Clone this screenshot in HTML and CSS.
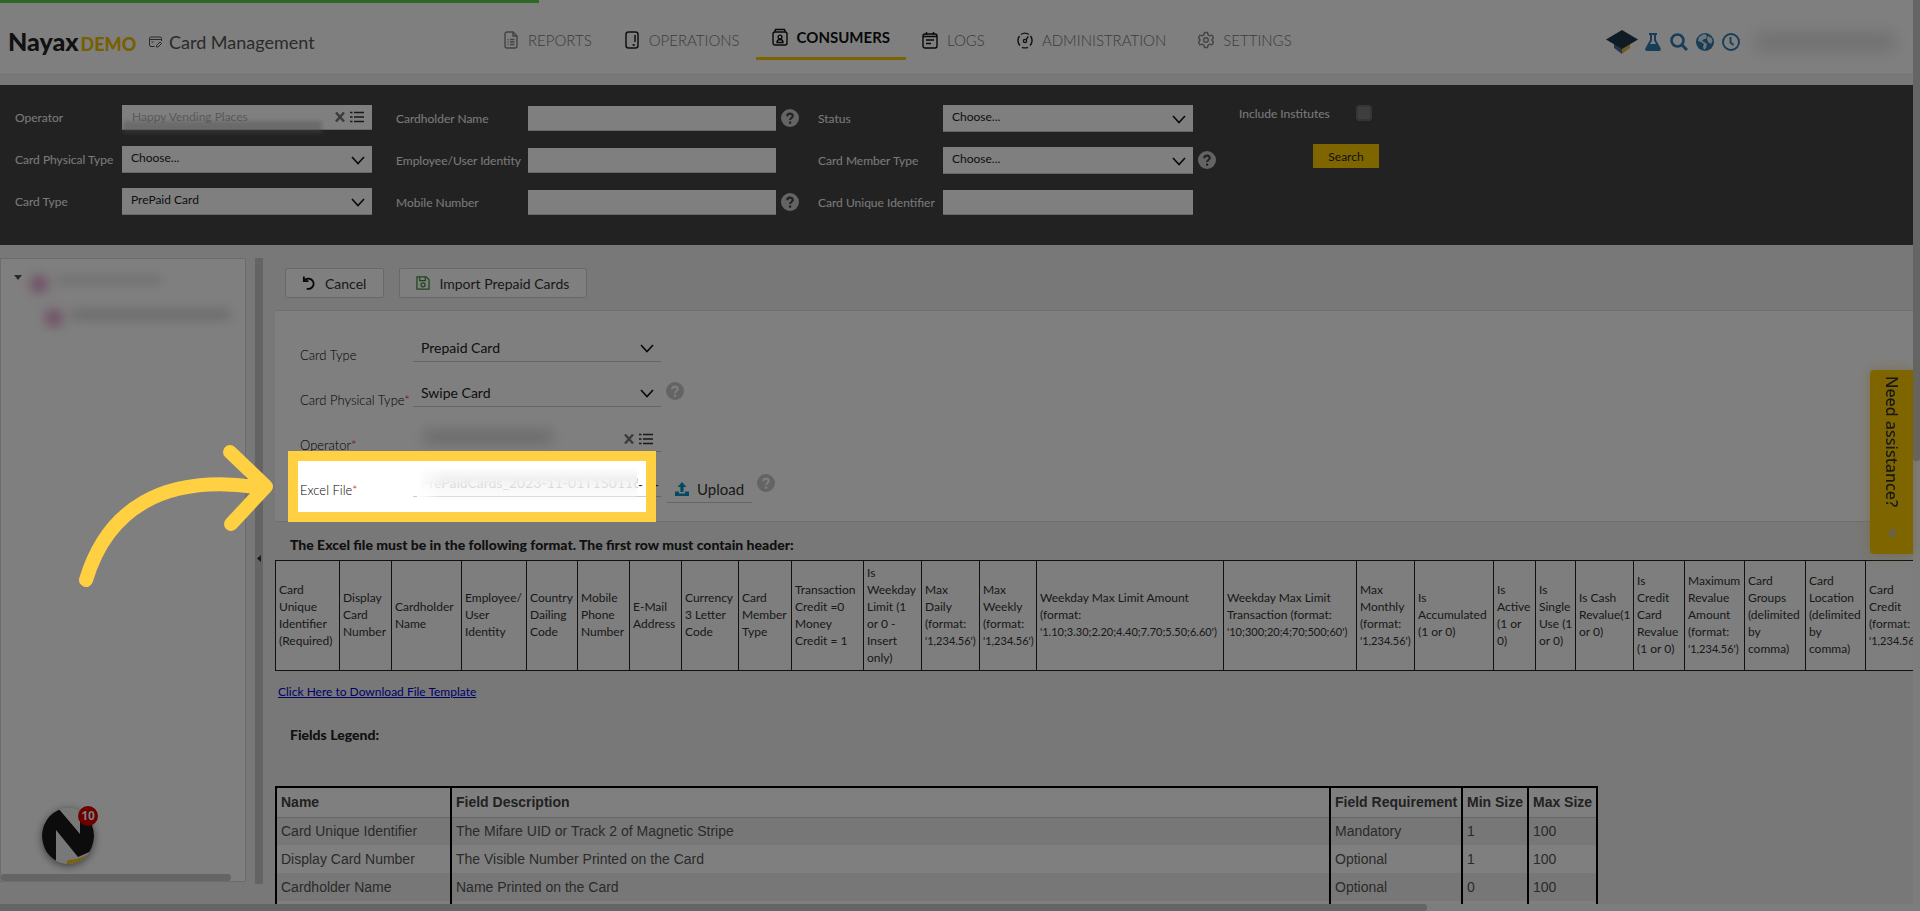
FILE: index.html
```html
<!DOCTYPE html>
<html lang="en">
<head>
<meta charset="utf-8">
<title>Card Management</title>
<link rel="stylesheet" href="styles.css">
</head>
<body>
<svg class="defs" aria-hidden="true">
  <symbol id="chev" viewBox="0 0 14 9"><path d="M1 1l6 6.500 6-6.500" fill="none" stroke="#111" stroke-width="1.600"/></symbol>
  <symbol id="x" viewBox="0 0 10 10"><path d="M1 .5l8 9M9 .5l-8 9" stroke="#777" stroke-width="2.400"/></symbol>
  <symbol id="list" viewBox="0 0 14 12"><path d="M4 1.500h10M4 6h10M4 10.500h10M0 1.500h2.500M0 6h2.500M0 10.500h2.500" stroke="#333" stroke-width="1.600"/></symbol>
  <symbol id="help" viewBox="0 0 18 18"><circle cx="9" cy="9" r="9" fill="currentColor"/><path d="M6.300 7.200C6.300 3.700 11.800 3.900 11.700 7c0 2-2.600 2-2.600 4M9.100 12.400v2.300" fill="none" stroke="var(--mark)" stroke-width="2.200"/></symbol>
</svg>
<div class="page">
  <div class="screen">
    <div class="progress"></div>
    <header class="header">
      <div class="brand">
        <span class="logo"><b>Nayax</b><i>DEMO</i></span>
        <svg class="cardicon" viewBox="0 0 13 12" fill="none" stroke="#555"><path d="M5.500 10.500H2A1.500 1.500 0 0 1 .5 9V2.500A1.500 1.500 0 0 1 2 1h9a1.500 1.500 0 0 1 1.500 1.500V5M.5 3.500h12M2.500 6h2M7.500 9.500L11 6l1.500 1.500L9 11H7.500z"/></svg>
        <h1>Card Management</h1>
      </div>
      <nav class="nav">
        <a href="#"><svg viewBox="0 0 16 18" fill="none" stroke="#888" stroke-width="1.400"><path d="M2 3a2 2 0 0 1 2-2h6l4 4v10a2 2 0 0 1-2 2H4a2 2 0 0 1-2-2zM10 1v4h4M7 8.500h4.500M7 11h4.500M7 13.500h4.500M4.500 8.500h1M4.500 11h1M4.500 13.500h1"/></svg>REPORTS</a>
        <a href="#"><svg viewBox="0 0 16 18" fill="none" stroke="#222" stroke-width="1.500"><rect x="2" y="1" width="12" height="16" rx="2.500"/><path d="M11 4v7M8.500 14H11"/></svg>OPERATIONS</a>
        <a href="#" class="active"><svg viewBox="0 0 16 18" fill="none" stroke="#111" stroke-width="1.400"><rect x="1" y="4" width="14" height="13" rx="2"/><path d="M2.500 4l1-2.500h9l1 2.500"/><circle cx="8" cy="9" r="1.900"/><path d="M5 14.500c0-4 6-4 6 0z"/></svg>CONSUMERS</a>
        <a href="#"><svg viewBox="0 0 16 18" fill="none" stroke="#111" stroke-width="1.400"><rect x="1" y="3" width="14" height="14" rx="2"/><path d="M4.500 1v3M11.500 1v3M1 5.500h14M4 9h8M4 12.500h5"/></svg>LOGS</a>
        <a href="#"><svg viewBox="0 0 16 18" fill="none" stroke="#222" stroke-width="1.400"><path d="M3 14.500A7.200 7.200 0 0 1 2.500 5M4 3.500a7 7 0 0 1 8 0M13.500 5a7.200 7.200 0 0 1-.5 9.500M5 16.300q3 1.200 6 0M9 8.800l2.200-3.300"/><circle cx="8" cy="10" r="1.600"/></svg>ADMINISTRATION</a>
        <a href="#"><svg viewBox="0 0 16 18" fill="none" stroke="#888" stroke-width="1.400"><path d="M6.500 1.500h3l.6 2.300 1.700 1 2.200-.7 1.500 2.600L13.900 9l1.600 2.300-1.500 2.600-2.200-.7-1.700 1-.6 2.300h-3l-.6-2.300-1.700-1-2.200.7-1.500-2.600L2.100 9 .5 6.700 2 4.100l2.200.7 1.700-1z" stroke-linejoin="round"/><circle cx="8" cy="9" r="2.300"/></svg>SETTINGS</a>
      </nav>
      <div class="tools">
        <svg class="cap" viewBox="0 0 32 24"><path d="M8 13v5l8 6v-9z" fill="#4b6d96"/><path d="M24 13v5l-8 6v-9z" fill="#e8b93a"/><path d="M16 0l16 9.500L16 19 0 9.500z" fill="#20394a"/></svg>
        <svg viewBox="0 0 18 18"><path d="M5 0h8v2h-1v5l4.500 8c.8 1.600.2 3-1.500 3H3c-1.700 0-2.300-1.400-1.500-3L6 7V2H5zM8 2v5.500L6 11h6l-2-3.500V2z" fill="#2f7bb0" fill-rule="evenodd"/></svg>
        <svg viewBox="0 0 18 18" fill="none" stroke="#2f7bb0"><circle cx="7.500" cy="7.500" r="6" stroke-width="2.600"/><path d="M12 12l5 5" stroke-width="3"/></svg>
        <svg viewBox="0 0 18 18"><circle cx="9" cy="9" r="9" fill="#2f7bb0"/><path d="M7 1.500L3 4 2 8l3 1 3 2-1 3 1 3 2-2 1-4-3-2-2-1 2-2 2 0 1-3-2-2zM12 3l-1 3 1 3 3 2 1.500-3-1-3z" fill="#fff" opacity=".85"/></svg>
        <svg viewBox="0 0 18 18" fill="none" stroke="#2f7bb0"><circle cx="9" cy="9" r="8" stroke-width="1.900"/><path d="M8.500 4v5.500l3 2.500" stroke-width="1.900"/></svg>
        <span class="user"></span>
      </div>
    </header>

    <form class="filters">
      <div class="group g1">
        <label for="op">Operator</label>
        <span class="lookup"><input id="op" value="Happy Vending Places"><i class="smudge"></i><svg class="ix"><use href="#x"/></svg><svg class="il"><use href="#list"/></svg></span>
        <label for="cpt">Card Physical Type</label>
        <span class="sel"><select id="cpt"><option>Choose...</option></select><svg><use href="#chev"/></svg></span>
        <label for="ct">Card Type</label>
        <span class="sel"><select id="ct"><option>PrePaid Card</option></select><svg><use href="#chev"/></svg></span>
      </div>
      <div class="group g2">
        <label for="chn">Cardholder Name</label><input id="chn"><svg class="help"><use href="#help"/></svg>
        <label for="eui">Employee/User Identity</label><input id="eui"><span></span>
        <label for="mob">Mobile Number</label><input id="mob"><svg class="help"><use href="#help"/></svg>
      </div>
      <div class="group g3">
        <label for="st">Status</label><span class="sel"><select id="st"><option>Choose...</option></select><svg><use href="#chev"/></svg></span><span></span>
        <label for="cmt">Card Member Type</label><span class="sel"><select id="cmt"><option>Choose...</option></select><svg><use href="#chev"/></svg></span><svg class="help"><use href="#help"/></svg>
        <label for="cui">Card Unique Identifier</label><input id="cui"><span></span>
      </div>
      <div class="g4">
        <div class="check"><label for="inc">Include Institutes</label><input type="checkbox" id="inc"></div>
        <button type="button" class="search">Search</button>
      </div>
    </form>

    <div class="work">
      <aside class="side">
        <svg class="twist" viewBox="0 0 8 5"><path d="M0 0h8L4 5z" fill="#555"/></svg>
        <div class="tree">
          <div class="node"><i></i><b></b></div>
          <div class="node sub"><i></i><b></b></div>
        </div>
        <div class="sidebar-thumb"></div>
      </aside>
      <div class="splitter"><svg viewBox="0 0 4 7"><path d="M4 0v7L0 3.500z" fill="#333"/></svg></div>
      <main class="main">
        <div class="actions">
          <button type="button"><svg viewBox="0 0 15 15" fill="none" stroke="#111" stroke-width="2"><path d="M2.500 5A5.500 5.500 0 1 1 5 13.500M2 .5V5.500h5"/></svg>Cancel</button>
          <button type="button"><svg viewBox="0 0 15 15" fill="none" stroke="#3b8a3b" stroke-width="1.300"><path d="M1 1h10l3 3v10H1zM4 1v4h6V1"/><circle cx="7.500" cy="9.500" r="2.200"/></svg>Import Prepaid Cards</button>
        </div>
        <form class="panel">
          <div class="row"><label for="f1">Card Type</label><span class="field sel"><select id="f1"><option>Prepaid Card</option></select><svg><use href="#chev"/></svg></span></div>
          <div class="row"><label for="f2">Card Physical Type<em>*</em></label><span class="field sel"><select id="f2"><option>Swipe Card</option></select><svg><use href="#chev"/></svg></span><svg class="help"><use href="#help"/></svg></div>
          <div class="row"><label for="f3">Operator<em>*</em></label><span class="field lookup"><input id="f3"><i class="smudge"></i><svg class="ix"><use href="#x"/></svg><svg class="il"><use href="#list"/></svg></span></div>
          <div class="row"><label for="f4">Excel File<em>*</em></label><span class="field file"><input id="f4" value="PrePaidCards_2023-11-01T150116110111"><i class="veil"></i><i class="dots">- - -</i></span><button type="button" class="upload"><svg viewBox="0 0 14 14" fill="#0b95c9"><path d="M7 0l4.500 5H8.600v5H5.400V5H2.500zM0 9.500h4v2h6v-2h4V14H0z"/></svg>Upload</button><svg class="help low"><use href="#help"/></svg></div>
        </form>
        <h2>The Excel file must be in the following format. The first row must contain header:</h2>
        <table class="format">
          <colgroup><col style="width:64px"><col style="width:52px"><col style="width:70px"><col style="width:65px"><col style="width:51px"><col style="width:52px"><col style="width:52px"><col style="width:57px"><col style="width:53px"><col style="width:72px"><col style="width:58px"><col style="width:58px"><col style="width:57px"><col style="width:187px"><col style="width:133px"><col style="width:58px"><col style="width:79px"><col style="width:42px"><col style="width:40px"><col style="width:58px"><col style="width:51px"><col style="width:60px"><col style="width:61px"><col style="width:60px"><col style="width:60px"></colgroup>
          <tr>
            <td>Card<br>Unique<br>Identifier<br>(Required)</td><td>Display<br>Card<br>Number</td><td>Cardholder<br>Name</td><td>Employee/<br>User<br>Identity</td><td>Country<br>Dailing<br>Code</td><td>Mobile<br>Phone<br>Number</td><td>E-Mail<br>Address</td><td>Currency<br>3 Letter<br>Code</td><td>Card<br>Member<br>Type</td><td>Transaction<br>Credit =0<br>Money<br>Credit = 1</td><td>Is<br>Weekday<br>Limit (1<br>or 0 -<br>Insert<br>only)</td><td>Max<br>Daily<br>(format:<br><span class="num">'1,234.56')</span></td><td>Max<br>Weekly<br>(format:<br><span class="num">'1,234.56')</span></td><td>Weekday Max Limit Amount<br>(format:<br><span class="num">'1.10;3.30;2.20;4.40;7.70;5.50;6.60')</span></td><td>Weekday Max Limit<br>Transaction (format:<br><span class="num">'10;300;20;4;70;500;60')</span></td><td>Max<br>Monthly<br>(format:<br><span class="num">'1,234.56')</span></td><td>Is<br>Accumulated<br>(1 or 0)</td><td>Is<br>Active<br>(1 or<br>0)</td><td>Is<br>Single<br>Use (1<br>or 0)</td><td>Is Cash<br>Revalue(1<br>or 0)</td><td>Is<br>Credit<br>Card<br>Revalue<br>(1 or 0)</td><td>Maximum<br>Revalue<br>Amount<br>(format:<br><span class="num">'1,234.56')</span></td><td>Card<br>Groups<br>(delimited<br>by<br>comma)</td><td>Card<br>Location<br>(delimited<br>by<br>comma)</td><td>Card<br>Credit<br>(format:<br><span class="num">'1,234.56')</span></td>
          </tr>
        </table>
        <a class="download" href="#">Click Here to Download File Template</a>
        <h2 class="legend-title">Fields Legend:</h2>
        <table class="legend">
          <thead><tr><th class="c1">Name</th><th>Field Description</th><th class="c3">Field Requirement</th><th class="c4">Min Size</th><th class="c5">Max Size</th></tr></thead>
          <tbody>
            <tr><td>Card Unique Identifier</td><td>The Mifare UID or Track 2 of Magnetic Stripe</td><td>Mandatory</td><td>1</td><td>100</td></tr>
            <tr><td>Display Card Number</td><td>The Visible Number Printed on the Card</td><td>Optional</td><td>1</td><td>100</td></tr>
            <tr><td>Cardholder Name</td><td>Name Printed on the Card</td><td>Optional</td><td>0</td><td>100</td></tr>
            <tr><td></td><td></td><td></td><td></td><td></td></tr>
          </tbody>
        </table>
      </main>
    </div>
  </div>
  <div class="vbar"><div></div></div>
  <div class="hbar"><div></div></div>
</div>

<button type="button" class="assist"><span>Need assistance?</span><svg viewBox="0 0 8 10"><path d="M7 1L2 5l5 4" fill="none" stroke="#c0c0c8" stroke-width="2.600"/></svg></button>
<div class="chat">
  <svg viewBox="0 0 52 56"><defs><clipPath id="cc"><ellipse cx="26" cy="28" rx="26" ry="28"/></clipPath></defs><g clip-path="url(#cc)"><rect width="52" height="56" fill="#f0f0f0"/><path d="M0 0h16l22 26V0h14v42L36 49 14 22v34H0z" fill="#181818"/><path d="M24 56l2-4c8 0 16-3 26-9v13z" fill="#f2c21a"/></g></svg>
  <span>10</span>
</div>
<div class="spotlight"></div>
<svg class="arrow" viewBox="0 0 196 144" fill="none" stroke="#ffd042" stroke-width="14" stroke-linecap="round" stroke-linejoin="round"><path d="M8 136C29 66 84 30 178 43M152 8l36 34.500L153 80"/></svg>
</body>
</html>
```
FILE: styles.css
```css
* { box-sizing: border-box; }
body { margin: 0; font-family: Lato, "Open Sans", sans-serif; font-size: 13px; color: #333; overflow: hidden; }
input, select, button { font-family: inherit; font-size: 13px; color: #222; margin: 0; border-radius: 0; }
.defs { display: none; }
.page { display: grid; grid-template-columns: minmax(0, 1fr) 7px; grid-template-rows: minmax(0, 1fr) 7px; height: 100vh; background: #f0f0f0; }
.screen { position: relative; overflow: hidden; }
.vbar { background: #fbfbfb; }
.vbar div { height: 51%; background: #cacaca; border-radius: 0 0 3px 3px; }
.hbar { background: #fbfbfb; grid-column: 1 / 3; }
.hbar div { width: 74.3%; height: 7px; background: #cacaca; border-radius: 0 3px 3px 0; }
.progress { position: absolute; left: 0; top: 0; width: 539px; height: 3px; background: #57d046; }

.header { height: 75px; background: #fff; display: flex; align-items: flex-start; border-bottom: 1px solid #e6e6e6; }
.brand { width: 487px; padding: 28px 0 0 8px; display: flex; align-items: center; height: 56px; }
.logo { display: flex; align-items: baseline; width: 141px; font-size: 25px; line-height: 28px; }
.logo b { font-weight: 900; color: #222; }
.logo i { font-style: normal; font-weight: 900; font-size: 18px; color: #f0be00; margin-left: 2px; }
.cardicon { width: 13px; height: 12px; margin-right: 7px; }
h1 { margin: 0; font-size: 18px; line-height: 24px; font-weight: 400; color: #555; }
.nav { display: flex; }
.nav a { display: flex; align-items: center; gap: 9px; height: 60px; padding: 24px 16px 5px; text-decoration: none; color: #777; font-size: 15px; font-weight: 300; white-space: nowrap; }
.nav a.active { color: #111; font-weight: 700; padding-top: 20px; padding-bottom: 3px; border-bottom: 3px solid #f8c800; }
.nav svg { width: 16px; height: 18px; }
.tools { margin-left: auto; padding: 30px 18px 0 0; display: flex; align-items: center; gap: 8px; }
.tools svg { width: 18px; height: 18px; }
.tools .cap { width: 32px; height: 24px; margin-right: -2px; }
.user { width: 140px; height: 20px; margin-left: 7px; background: #e2e2e2; filter: blur(8px); }

.filters { margin-top: 10px; height: 160px; background: #444; display: flex; align-items: flex-start; padding: 18px 0 0 15px; }
.filters label { color: #f4f4f4; white-space: nowrap; font-size: 12px; }
.group { display: grid; align-items: center; grid-auto-rows: 42px; margin-top: -6px; }
.group input { height: 25px; width: 100%; border: 0; border-bottom: 1px solid #ccc; background: #fff; padding: 0 10px; }
.g1 { grid-template-columns: 107px 250px; width: 381px; margin-top: -7px; }
.g2 { grid-template-columns: 132px 248px 23px; width: 422px; }
.g3 { grid-template-columns: 125px 250px 22px; width: 421px; }
.g4 { width: 140px; display: flex; flex-direction: column; align-items: flex-end; gap: 21px; }
.check { display: flex; justify-content: space-between; align-items: center; width: 133px; height: 20px; margin-right: 7px; }
.check input { appearance: none; width: 16px; height: 16px; background: #7c7c7c; border: 2px solid #6a6a6a; border-radius: 3px; }
.search { width: 66px; height: 24px; border: 0; background: #ffcb00; color: #222; font-size: 12px; }
.sel { position: relative; display: block; }
.sel select { appearance: none; width: 100%; height: 27px; border: 0; border-bottom: 1px solid #ccc; background: #fff; padding: 0 9px 3px; display: block; }
.group select { font-size: 12px; }
.sel svg { position: absolute; right: 7px; top: 10px; width: 14px; height: 9px; pointer-events: none; }
.lookup { position: relative; display: block; }
.lookup svg { position: absolute; pointer-events: none; }
.ix { right: 27px; top: 7px; width: 10px; height: 10px; }
.il { right: 8px; top: 6px; width: 14px; height: 12px; }
.g1 .lookup input { color: #b4b4b4; font-size: 12px; }
.smudge { position: absolute; left: 10px; top: 5px; width: 130px; height: 14px; background: #999; opacity: .4; filter: blur(7px); }
.g1 .smudge { left: 1px; top: 16px; width: 199px; height: 12px; filter: blur(2px); }
.help { width: 18px; height: 18px; color: #c8c8c8; --mark: #444; margin-left: 5px; }
.panel .help { color: #c8c8c8; --mark: #fff; }

.work { display: flex; padding-top: 13px; height: calc(100% - 245px); align-items: flex-start; }
.side { position: relative; width: 246px; flex: none; height: calc(100% - 22px); background: #fff; border: 1px solid #d8d8d8; padding: 16px 0 0 13px; overflow: hidden; display: flex; align-items: flex-start; }
.twist { flex: none; width: 8px; height: 5px; }
.node { display: flex; align-items: center; margin-left: 8px; height: 34px; filter: blur(6px); }
.tree { margin-top: -8px; }
.node i { width: 18px; height: 18px; background: #e09ac8; border-radius: 9px; }
.node b { width: 106px; height: 8px; margin: 0 0 8px 8px; background: #ddd; }
.node.sub { margin-left: 23px; }
.node.sub b { width: 160px; height: 9px; background: #d0d0d0; }
.sidebar-thumb { position: absolute; left: 0; bottom: 0; width: 230px; height: 7px; border-radius: 3px; background: #cacaca; }
.splitter { width: 8px; flex: none; height: calc(100% - 20px); margin: 0 12px 0 9px; background: #c8c8c8; display: flex; align-items: center; justify-content: center; padding-bottom: 26px; }
.splitter svg { width: 4px; height: 7px; }
.main { flex: 1; min-width: 0; padding-top: 10px; }
.actions { display: flex; gap: 15px; padding-left: 10px; }
.actions button { display: flex; align-items: center; gap: 9px; height: 30px; padding: 0 17px 0 16px; border: 1px solid #d0d0d0; border-radius: 2px; background: #fff; font-size: 14px; white-space: nowrap; color: #333; }
.actions svg { width: 14px; height: 14px; }
.panel { margin-top: 12px; height: 212px; background: #fff; border-top: 1px solid #dcdcdc; border-bottom: 1px solid #dcdcdc; padding: 22px 0 0 25px; }
.row { display: flex; align-items: flex-start; height: 45px; }
.row label { width: 113px; padding-top: 13px; font-weight: 300; color: #000; line-height: 18px; white-space: nowrap; }
.row em { color: #e02020; font-style: normal; }
.field { width: 248px; }
.field select, .field input { width: 100%; height: 29px; border: 0; border-bottom: 1px solid #ccc; background: transparent; padding: 0 8px; font-size: 14px; display: block; }
.field.sel svg { top: 11px; }
.row .help { margin: 4px 0 0 5px; }
.row .low { margin: 6px 0 0 5px; }
.field.lookup .ix { top: 11px; }
.field.lookup .il { top: 10px; }
.field.lookup .smudge { top: 7px; }
.file { position: relative; }
.file input { color: #c4c4c4; }
.veil { position: absolute; left: 4px; top: -1px; width: 220px; height: 33px; background: linear-gradient(90deg, #fff, rgba(255,255,255,0) 12%), linear-gradient(#fff 0, #f1f1f1 35%, rgba(240,240,240,.5) 60%, rgba(250,250,250,.3)); }
.dots { position: absolute; left: 225px; top: 10px; font-style: normal; white-space: nowrap; line-height: 14px; background: #fff; }
.upload { margin: 6px 0 0 6px; width: 85px; height: 29px; border: 0; border-bottom: 1px solid #ccc; background: transparent; display: flex; align-items: center; justify-content: center; gap: 8px; padding: 2px 0 0; font-size: 15px; color: #333; }
.upload svg { width: 14px; height: 14px; }

h2 { margin: 0; padding: 14px 0 0 15px; font-size: 14px; line-height: 18px; font-weight: 900; color: #222; white-space: nowrap; }
.format { margin-top: 6px; border-collapse: collapse; table-layout: fixed; width: 1644px; }
.format td { height: 110px; border: 1px solid #222; background: #fcfcfc; padding: 0 3px 2px; font-size: 12px; line-height: 17px; white-space: nowrap; color: #333; }
.num { font-size: 11px; }
.download { display: block; margin: 12px 0 0 3px; font-size: 12px; line-height: 18px; color: #0000d0; width: max-content; }
.legend-title { padding-top: 25px; }
.legend { margin-top: 42px; width: 1323px; border-collapse: collapse; table-layout: fixed; font-family: "Liberation Sans", sans-serif; font-size: 14px; color: #555; border: 2px solid #000; background: #fff; }
.legend th, .legend td { border-left: 2px solid #000; border-right: 2px solid #000; text-align: left; height: 28px; padding: 0 4px; line-height: 16px; white-space: nowrap; }
.legend th { height: 30px; border-bottom: 1px solid #ccc; color: #444; }
.legend tbody tr:nth-child(odd) { background: #efefef; }
.c1 { width: 175px; }
.c3 { width: 132px; }
.c4 { width: 66px; }
.c5 { width: 69px; }

/* Floating widgets and the guided-tour highlight */
.assist { position: fixed; right: 7px; top: 370px; width: 43px; height: 184px; border: 0; border-radius: 4px 0 0 4px; background: #ffcb00; box-shadow: 0 0 12px #e8c04088; padding: 6px 0 16px; display: flex; flex-direction: column; align-items: center; justify-content: space-between; font-family: "Noto Sans", sans-serif; font-size: 16px; font-weight: 500; color: #333; }
.assist span { writing-mode: vertical-rl; line-height: 20px; white-space: nowrap; }
.assist svg { flex: none; width: 8px; height: 10px; }
.chat { position: fixed; left: 42px; bottom: 47px; width: 52px; height: 56px; border-radius: 50%; box-shadow: 0 2px 8px #777; }
.chat svg { display: block; width: 52px; height: 56px; }
.chat span { position: absolute; right: -4px; top: -2px; width: 20px; height: 20px; border-radius: 50%; background: #d40000; color: #fff; font: 700 12px/20px "Noto Sans", sans-serif; text-align: center; }
.spotlight { position: fixed; left: 288px; top: 451px; width: 368px; height: 71px; border: 10px solid #ffd042; box-shadow: 0 0 0 3000px rgba(0, 0, 0, .5); pointer-events: none; }
.arrow { position: fixed; left: 78px; top: 444px; width: 196px; height: 144px; pointer-events: none; }
```
